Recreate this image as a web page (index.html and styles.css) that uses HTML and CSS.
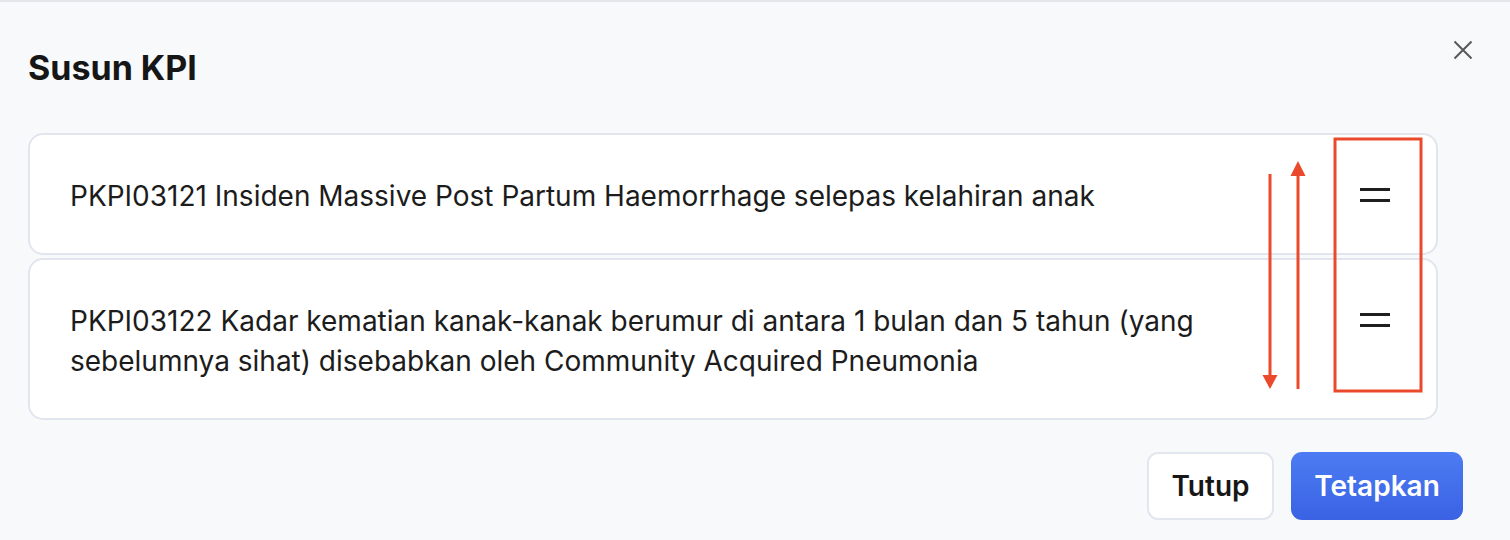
FILE: index.html
```html
<!DOCTYPE html>
<html lang="ms">
<head>
<meta charset="utf-8">
<title>Susun KPI</title>
<link rel="stylesheet" href="styles.css">
</head>
<body>
<div class="modal">
  <header class="modal-header">
    <h1 class="modal-title">Susun KPI</h1>
    <button class="close-btn" aria-label="Tutup">
      <svg width="20" height="20" viewBox="0 0 20 20"><path d="M1.5 1.5 L18.5 18.5 M18.5 1.5 L1.5 18.5" stroke="#595959" stroke-width="2" fill="none"/></svg>
    </button>
  </header>
  <div class="kpi-list">
    <div class="kpi-card">
      <p class="kpi-text">PKPI03121 Insiden Massive Post Partum Haemorrhage selepas kelahiran anak</p>
      <span class="handle"><i></i><i></i></span>
    </div>
    <div class="kpi-card">
      <p class="kpi-text">PKPI03122 Kadar kematian kanak-kanak berumur di antara 1 bulan dan 5 tahun (yang sebelumnya sihat) disebabkan oleh Community Acquired Pneumonia</p>
      <span class="handle"><i></i><i></i></span>
    </div>
  </div>
  <footer class="modal-footer">
    <button class="btn btn-secondary">Tutup</button>
    <button class="btn btn-primary">Tetapkan</button>
  </footer>
</div>
<svg class="annotation" width="1510" height="540" viewBox="0 0 1510 540">
  <g fill="#ea4a2b" stroke="#ea4a2b">
    <line x1="1270" y1="174" x2="1270" y2="377" stroke-width="3"/>
    <polygon points="1262.5,375 1277.5,375 1270,389" stroke="none"/>
    <line x1="1298" y1="174" x2="1298" y2="389" stroke-width="3"/>
    <polygon points="1290.5,176 1305.5,176 1298,161" stroke="none"/>
    <rect x="1335" y="139" width="86" height="252" fill="none" stroke-width="3"/>
  </g>
</svg>
</body>
</html>
```

FILE: styles.css
```css
* { box-sizing: border-box; }
html, body { margin: 0; padding: 0; }
body {
  background: #f8f9fb;
  font-family: Inter, "Noto Sans", "Liberation Sans", sans-serif;
  color: #1b1b1b;
  width: 1510px;
  height: 540px;
  overflow: hidden;
}
.modal {
  height: 540px;
  border-top: 2px solid #e4e6ea;
  padding: 46px 47px 0 28px;
}
.modal-header {
  display: flex;
  align-items: flex-start;
  justify-content: space-between;
}
.modal-title {
  margin: 0;
  font-size: 34px;
  line-height: 40px;
  font-weight: 700;
  color: #161616;
}
.close-btn {
  margin: -8px -10px 0 0;
  padding: 0;
  border: 0;
  background: none;
  width: 20px;
  height: 20px;
  display: flex;
}
.kpi-list {
  margin: 45px 25px 0 0;
  display: flex;
  flex-direction: column;
  gap: 3px;
}
.kpi-card {
  display: flex;
  align-items: flex-start;
  background: #fff;
  border: 2px solid #e1e5ed;
  border-radius: 15px;
  padding: 41px 46px 37px 40px;
}
.kpi-text {
  flex: 1;
  margin: 0 120px 0 0;
  font-size: 28px;
  line-height: 40px;
  color: #1c1c1c;
}
.handle {
  width: 30px;
  height: 40px;
  margin-top: -1px;
  display: flex;
  flex-direction: column;
  justify-content: center;
  gap: 8.5px;
}
.handle i {
  display: block;
  height: 2.5px;
  background: #1f1f1f;
}
.modal-footer {
  margin-top: 32px;
  display: flex;
  justify-content: flex-end;
  gap: 17px;
}
.btn {
  height: 68px;
  border-radius: 11px;
  font-family: inherit;
  font-size: 28px;
  font-weight: 600;
  padding: 0;
}
.btn-secondary {
  width: 127px;
  background: #fff;
  border: 2px solid #e2e6ee;
  color: #171717;
}
.btn-primary {
  width: 172px;
  border: 0;
  color: #fff;
  background: linear-gradient(180deg, #4c7cf3 0%, #3a62e3 100%);
}
.annotation {
  position: absolute;
  left: 0;
  top: 0;
  pointer-events: none;
}
```
